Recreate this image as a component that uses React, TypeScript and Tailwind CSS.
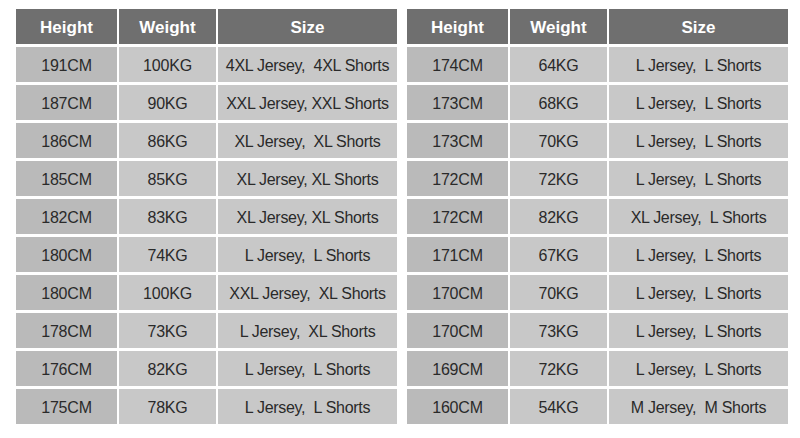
import React from "react";

const left: [string, string, string][] = [
  ["191CM", "100KG", "4XL Jersey,  4XL Shorts"],
  ["187CM", "90KG", "XXL Jersey, XXL Shorts"],
  ["186CM", "86KG", "XL Jersey,  XL Shorts"],
  ["185CM", "85KG", "XL Jersey, XL Shorts"],
  ["182CM", "83KG", "XL Jersey, XL Shorts"],
  ["180CM", "74KG", "L Jersey,  L Shorts"],
  ["180CM", "100KG", "XXL Jersey,  XL Shorts"],
  ["178CM", "73KG", "L Jersey,  XL Shorts"],
  ["176CM", "82KG", "L Jersey,  L Shorts"],
  ["175CM", "78KG", "L Jersey,  L Shorts"],
];

const right: [string, string, string][] = [
  ["174CM", "64KG", "L Jersey,  L Shorts"],
  ["173CM", "68KG", "L Jersey,  L Shorts"],
  ["173CM", "70KG", "L Jersey,  L Shorts"],
  ["172CM", "72KG", "L Jersey,  L Shorts"],
  ["172CM", "82KG", "XL Jersey,  L Shorts"],
  ["171CM", "67KG", "L Jersey,  L Shorts"],
  ["170CM", "70KG", "L Jersey,  L Shorts"],
  ["170CM", "73KG", "L Jersey,  L Shorts"],
  ["169CM", "72KG", "L Jersey,  L Shorts"],
  ["160CM", "54KG", "M Jersey,  M Shorts"],
];

function Table({ rows }: { rows: [string, string, string][] }) {
  return (
    <div className="grid grid-cols-[101px_97px_179px] auto-rows-[35px] content-start gap-x-[2px] gap-y-[3px] w-[381px]">
      {["Height", "Weight", "Size"].map((h) => (
        <div
          key={h}
          className="bg-[#6f6f6f] text-white font-bold text-[17px] flex items-center justify-center pt-[3px]"
        >
          {h}
        </div>
      ))}
      {rows.map((r, i) => (
        <React.Fragment key={i}>
          <div className="bg-[#bababa] text-[#2a2a2a] text-[16px] tracking-[-0.2px] flex items-center justify-center whitespace-pre pt-[3px]">
            {r[0]}
          </div>
          <div className="bg-[#c8c8c8] text-[#2a2a2a] text-[16px] tracking-[-0.2px] flex items-center justify-center whitespace-pre pt-[3px]">
            {r[1]}
          </div>
          <div className="bg-[#c8c8c8] text-[#2a2a2a] text-[16px] tracking-[-0.3px] flex items-center justify-center whitespace-pre pt-[3px]">
            {r[2]}
          </div>
        </React.Fragment>
      ))}
    </div>
  );
}

export default function App() {
  return (
    <div
      className="w-[800px] h-[438px] bg-white flex items-start gap-[10px] pl-[16px] pt-[9px]"
      style={{ fontFamily: '"Liberation Sans", Arial, sans-serif' }}
    >
      <Table rows={left} />
      <Table rows={right} />
    </div>
  );
}
